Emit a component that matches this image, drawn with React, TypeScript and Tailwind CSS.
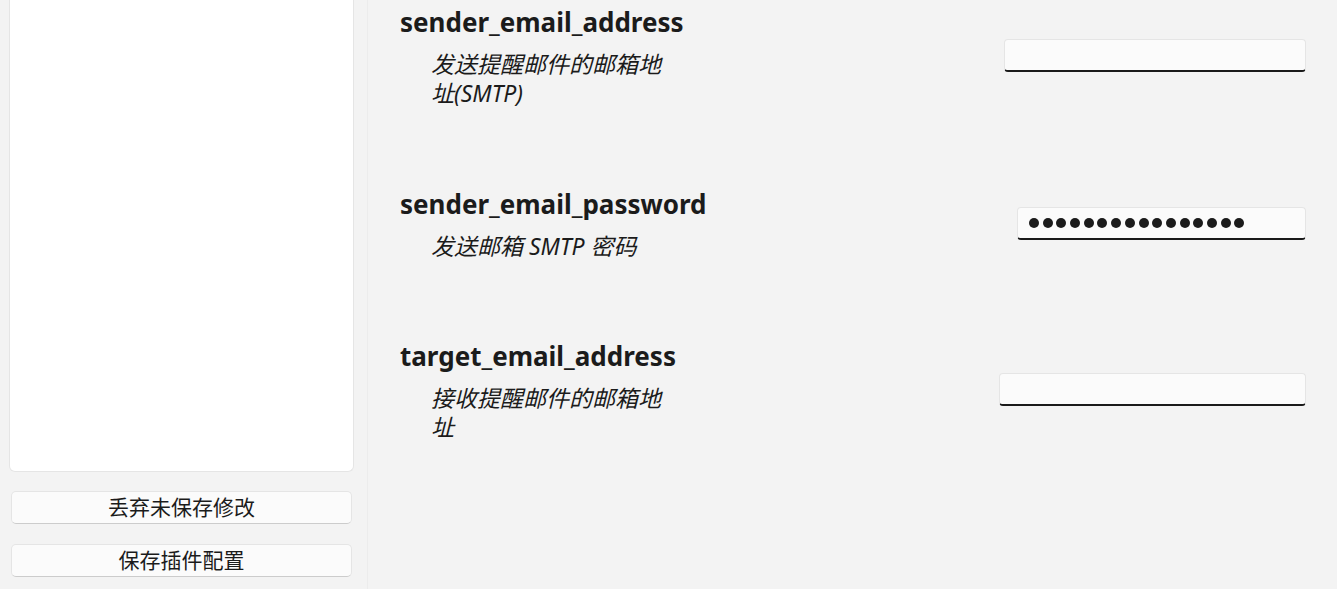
import React from 'react';

const font = { fontFamily: '"Noto Sans", "Noto Sans CJK SC", sans-serif' };

interface FieldProps {
  name: string;
  desc: string;
  inputWidth: string;
  password?: boolean;
}

function Field({ name, desc, inputWidth, password }: FieldProps) {
  return (
    <div className="flex items-center justify-between">
      <div className="flex flex-col">
        <div className="text-[26px] font-bold leading-[32px] text-[#1b1b1b]">{name}</div>
        <div className="mt-[12px] ml-[31px] max-w-[240px] text-[23px] italic leading-[29px] text-[#1b1b1b]">
          {desc}
        </div>
      </div>
      <div
        className={`mb-[3px] flex h-[33px] items-center rounded-[4px] border border-[#e5e5e5] border-b-2 border-b-[#1a1a1a] bg-[#fbfbfb] pl-[11px] ${inputWidth}`}
      >
        {password && (
          <div className="flex gap-[3.7px]">
            {Array.from({ length: 16 }).map((_, i) => (
              <div key={i} className="h-[10px] w-[10px] rounded-full bg-[#1b1b1b]" />
            ))}
          </div>
        )}
      </div>
    </div>
  );
}

export default function App() {
  return (
    <div className="flex h-[589px] w-full bg-[#f3f3f3]" style={font}>
      <div className="flex w-[368px] shrink-0 flex-col border-r border-[#ececec]">
        <div className="ml-[9px] h-[472px] w-[345px] rounded-b-[6px] border border-t-0 border-[#e5e5e5] bg-white" />
        <button className="ml-[11px] mt-[19px] h-[33px] w-[341px] rounded-[5px] border border-[#e5e5e5] border-b-[#cccccc] bg-[#fbfbfb] text-[21px] leading-none text-[#1b1b1b]">
          丢弃未保存修改
        </button>
        <button className="ml-[11px] mt-[20px] h-[33px] w-[341px] rounded-[5px] border border-[#e5e5e5] border-b-[#cccccc] bg-[#fbfbfb] text-[21px] leading-none text-[#1b1b1b]">
          保存插件配置
        </button>
      </div>
      <div className="flex flex-1 flex-col pl-[32px] pr-[31px] pt-[6px]">
        <Field name="sender_email_address" desc="发送提醒邮件的邮箱地址(SMTP)" inputWidth="w-[302px]" />
        <div className="h-[80px]" />
        <Field name="sender_email_password" desc="发送邮箱 SMTP 密码" inputWidth="w-[289px]" password />
        <div className="h-[79px]" />
        <Field name="target_email_address" desc="接收提醒邮件的邮箱地址" inputWidth="w-[307px]" />
      </div>
    </div>
  );
}
